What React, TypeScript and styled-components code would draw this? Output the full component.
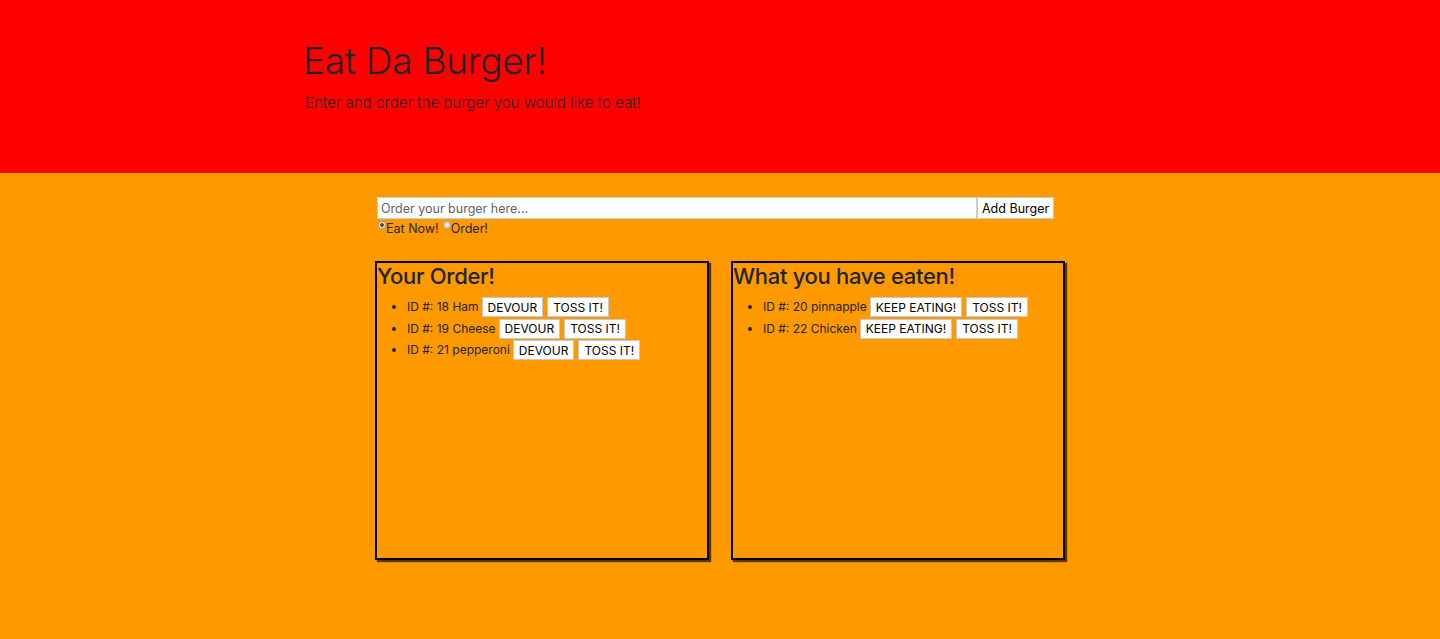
import React from "react";
import styled, { createGlobalStyle } from "styled-components";

const GlobalStyle = createGlobalStyle`
  html, body { margin: 0; padding: 0; }
  body {
    font-family: Inter, "Liberation Sans", Arial, sans-serif;
    color: #212529;
    background: #ff9900;
  }
  * { box-sizing: border-box; }
`;

const Jumbotron = styled.header`
  background: #ff0000;
  height: 173px;
  padding-top: 39px;
`;

const HeaderInner = styled.div`
  width: 830px;
  margin: 0 auto;
`;

const Title = styled.h1`
  margin: 0 0 0 -2px;
  font-size: 37px;
  font-weight: 300;
  line-height: 1.2;
  letter-spacing: -0.25px;
  color: #212529;
`;

const Lead = styled.p`
  margin: 10px 0 0;
  font-size: 15px;
  font-weight: 300;
  color: #212529;
`;

const Main = styled.main`
  background: #ff9900;
  min-height: 466px;
  padding-top: 24px;
`;

const Container = styled.div`
  width: 690px;
  margin: 0 auto;
`;

const Form = styled.form`
  margin-left: 2px;
`;

const InputRow = styled.div`
  display: flex;
`;

const TextInput = styled.input`
  width: 600px;
  height: 22px;
  border: 1px solid #cfcfcf;
  padding: 0 3px;
  font-family: inherit;
  font-size: 12.5px;
  color: #212529;
  background: #fff;
  outline: none;
  &::placeholder { color: #5f6368; }
`;

const SmallButton = styled.button`
  height: 22px;
  background: #fff;
  border: 1.5px solid #c8c8c8;
  padding: 0 4px;
  font-family: inherit;
  font-size: 12.5px;
  color: #000;
  margin: 0;
  cursor: pointer;
`;

const RadioRow = styled.div`
  display: flex;
  align-items: flex-start;
  font-size: 12.5px;
  line-height: 16px;
`;

const Radio = styled.input`
  appearance: none;
  width: 8px;
  height: 8px;
  margin: 2px 0 0 1px;
  border-radius: 50%;
  border: 1px solid #a8a8a8;
  background: radial-gradient(circle, #ececec 0%, #d0d0d0 100%);
  &:checked {
    background: radial-gradient(circle, #555 0 1.6px, #e0e0e0 2px);
  }
`;

const RadioLabel = styled.label`
  margin-right: 3px;
  padding-top: 2px;
`;

const Columns = styled.div`
  display: grid;
  grid-template-columns: 334px 334px;
  column-gap: 22px;
  margin-top: 24px;
`;

const Box = styled.section`
  height: 299px;
  border: 2px solid #000;
  box-shadow: 2px 2px 1px rgba(40, 20, 0, 0.75);
`;

const BoxTitle = styled.h2`
  margin: 0;
  font-size: 22px;
  font-weight: 500;
  line-height: 26px;
  letter-spacing: -0.3px;
  color: #212529;
`;

const List = styled.ul`
  margin: 8px 0 0;
  padding-left: 30px;
  font-size: 12px;
`;

const Item = styled.li`
  height: 21.5px;
  line-height: 20px;
`;

const ItemButton = styled(SmallButton)`
  height: 20px;
  margin-left: 3px;
  font-size: 12px;
  padding: 0 5px;
  vertical-align: top;
  & + & { margin-left: 4px; }
`;

type Burger = { id: number; name: string };

const orders: Burger[] = [
  { id: 18, name: "Ham" },
  { id: 19, name: "Cheese" },
  { id: 21, name: "pepperoni" },
];

const eaten: Burger[] = [
  { id: 20, name: "pinnapple" },
  { id: 22, name: "Chicken" },
];

export default function App() {
  return (
    <>
      <GlobalStyle />
      <Jumbotron>
        <HeaderInner>
          <Title>Eat Da Burger!</Title>
          <Lead>Enter and order the burger you would like to eat!</Lead>
        </HeaderInner>
      </Jumbotron>
      <Main>
        <Container>
          <Form onSubmit={(e) => e.preventDefault()}>
            <InputRow>
              <TextInput placeholder="Order your burger here..." />
              <SmallButton type="submit">Add Burger</SmallButton>
            </InputRow>
            <RadioRow>
              <Radio type="radio" name="eat" defaultChecked id="eatnow" />
              <RadioLabel htmlFor="eatnow">Eat Now!</RadioLabel>
              <Radio type="radio" name="eat" id="order" />
              <RadioLabel htmlFor="order">Order!</RadioLabel>
            </RadioRow>
          </Form>
          <Columns>
            <Box>
              <BoxTitle>Your Order!</BoxTitle>
              <List>
                {orders.map((b) => (
                  <Item key={b.id}>
                    ID #: {b.id} {b.name}
                    <ItemButton>DEVOUR</ItemButton>
                    <ItemButton>TOSS IT!</ItemButton>
                  </Item>
                ))}
              </List>
            </Box>
            <Box>
              <BoxTitle>What you have eaten!</BoxTitle>
              <List>
                {eaten.map((b) => (
                  <Item key={b.id}>
                    ID #: {b.id} {b.name}
                    <ItemButton>KEEP EATING!</ItemButton>
                    <ItemButton>TOSS IT!</ItemButton>
                  </Item>
                ))}
              </List>
            </Box>
          </Columns>
        </Container>
      </Main>
    </>
  );
}
